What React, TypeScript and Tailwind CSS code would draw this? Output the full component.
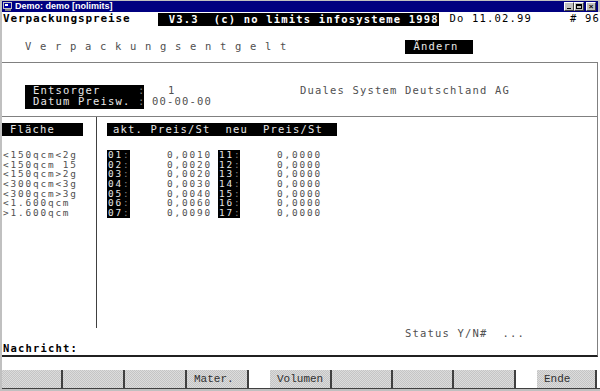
import React from 'react';

const mono = "font-['DejaVu_Sans_Mono',monospace] text-[10.5px] tracking-[1.18px] whitespace-pre";
const small = "font-['DejaVu_Sans_Mono',monospace] text-[9.4px] tracking-[1.84px] whitespace-pre";

const flaechen = ['<150qcm<2g', '<150qcm 15', '<150qcm>2g', '<300qcm<3g', '<300qcm>3g', '<1.600qcm', '>1.600qcm'];
const preise = ['0,0010', '0,0020', '0,0020', '0,0030', '0,0040', '0,0060', '0,0090'];

const TitleButton: React.FC<{ children: React.ReactNode }> = ({ children }) => (
    <div className="w-[10px] h-[9px] bg-[#c0c0c0] border-t border-l border-white border-r border-b border-r-[#404040] border-b-[#404040] flex items-center justify-center">
        {children}
    </div>
);

const FKey: React.FC<{ w: string; label?: string }> = ({ w, label }) => (
    <div className={`${w} h-full border-r-2 border-[#404040] bg-[repeating-conic-gradient(#c4c4c4_0_25%,#dcdcdc_0_50%)] [background-size:2px_2px] flex items-center pl-[7px] font-['Liberation_Mono',monospace] text-[11px] text-[#303030]`}>
        {label}
    </div>
);

export default function App() {
    return (
        <div className="w-[600px] h-[391px] bg-[#c0c0c0] pt-[1px] pl-[2px] flex flex-col overflow-hidden">
            {/* title bar */}
            <div className="h-[11px] mr-[2px] bg-[#000080] flex items-center pl-[1px] pr-[2px]">
                <svg width="10" height="9" viewBox="0 0 10 9">
                    <rect x="0" y="0" width="9" height="7" fill="#c0c0c0" />
                    <rect x="1" y="1" width="7" height="5" fill="#0000a0" />
                    <rect x="2" y="2" width="3" height="2" fill="#ffffff" />
                    <rect x="2" y="7" width="6" height="2" fill="#808080" />
                </svg>
                <span className="ml-[2px] text-white font-bold text-[9px] leading-none font-['Liberation_Sans',sans-serif]">Demo: demo [nolimits]</span>
                <div className="ml-auto flex">
                    <TitleButton><div className="w-[4px] h-[1px] bg-black mt-[4px]" /></TitleButton>
                    <TitleButton><div className="w-[6px] h-[5px] border border-black border-t-2" /></TitleButton>
                    <div className="w-[2px]" />
                    <TitleButton><span className="text-[8px] leading-none font-bold text-black font-['Liberation_Sans',sans-serif]">×</span></TitleButton>
                </div>
            </div>

            {/* screen */}
            <div className="flex-1 bg-white flex flex-col">
                <div className={`${mono} h-[14px] flex items-center`}>
                    <div className="w-[156px] pl-[1px] text-black font-bold text-[11px] tracking-[0.88px]">Verpackungspreise</div>
                    <div className="w-[282px] h-[13px] mt-[1px] bg-black text-white font-bold pl-[11px] flex items-center">V3.3  (c) no limits infosysteme 1998</div>
                    <div className="pl-[10px] text-black">Do 11.02.99</div>
                    <div className="ml-[38px] text-black">#&nbsp;96</div>
                </div>

                <div className={`${mono} mt-[14px] h-[14px] flex items-center text-[#505050]`}>
                    <div className="pl-[23px]">V e r p a c k u n g s e n t g e l t</div>
                    <div className="ml-[117px] w-[68px] h-[14px] bg-black text-[#e8e8e8] pl-[9px] flex items-center">Ändern</div>
                </div>

                <div className="mt-[8px] mr-[2px] flex-1 flex flex-col border-t border-r border-[#808080] border-b-2 border-b-[#202020]">
                    {/* Entsorger */}
                    <div className={`${mono} h-[54px] border-b border-[#808080] pt-[22px] flex`}>
                        <div className="ml-[23px] w-[119px] h-[24px] bg-black text-[#e8e8e8] pl-[8px] flex flex-col">
                            <div className="h-[11px] leading-[11px]">Entsorger     <span className="text-[#808080]">:</span></div>
                            <div className="h-[11px] leading-[11px]">Datum Preisw. <span className="text-[#808080]">:</span></div>
                        </div>
                        <div className="w-[156px] flex flex-col text-[#505050]">
                            <div className="h-[11px] leading-[11px] pl-[24px]">1</div>
                            <div className="h-[11px] leading-[11px] pl-[8px]">00-00-00</div>
                        </div>
                        <div className="h-[11px] leading-[11px] text-[#505050]">Duales System Deutschland AG</div>
                    </div>

                    {/* Tabelle */}
                    <div className={`${mono} h-[211px] flex`}>
                        <div className="w-[95px] border-r border-[#404040] pt-[6px] flex flex-col">
                            <div className="w-[81px] h-[13px] bg-black text-[#e8e8e8] pl-[8px] flex items-center">Fläche</div>
                            <div className={`${small} mt-[14px] flex flex-col text-[#505050]`}>
                                {flaechen.map((f) => (
                                    <div key={f} className="h-[9.7px] leading-[9.7px] pl-[1px]">{f}</div>
                                ))}
                            </div>
                        </div>
                        <div className="flex-1 pt-[6px] flex flex-col">
                            <div className="ml-[10px] w-[230px] h-[13px] bg-black text-[#e8e8e8] pl-[6px] flex items-center">akt. Preis/St  neu  Preis/St</div>
                            <div className={`${small} mt-[14px] flex flex-col text-[#505050]`}>
                                {preise.map((p, i) => (
                                    <div key={i} className="h-[9.7px] leading-[9.7px] flex">
                                        <div className="ml-[10px] w-[23px] bg-black text-[#e8e8e8] pl-[1px]">0{i + 1}<span className="text-[#808080]">:</span></div>
                                        <div className="w-[82px] text-right">{p}</div>
                                        <div className="ml-[6px] w-[22px] bg-black text-[#e8e8e8] pl-[1px]">1{i + 1}<span className="text-[#808080]">:</span></div>
                                        <div className="pl-[37px]">0,0000</div>
                                    </div>
                                ))}
                            </div>
                        </div>
                    </div>

                    <div className={`${mono} h-[11px] leading-[11px] pl-[403px] text-[#505050]`}>Status Y/N#  ...</div>
                    <div className={`${mono} mt-[3px] h-[12px] leading-[12px] pl-[1px] text-black font-bold`}>Nachricht:</div>
                </div>

                <div className="h-[13px]" />
                <div className="h-[18px] flex bg-white">
                    <FKey w="w-[61px]" />
                    <FKey w="w-[62px]" />
                    <FKey w="w-[62px]" />
                    <FKey w="w-[62px]" label="Mater." />
                    <div className="w-[21px]" />
                    <FKey w="w-[62px]" label="Volumen" />
                    <FKey w="w-[61px]" />
                    <FKey w="w-[61px]" />
                    <FKey w="w-[62px]" />
                    <div className="w-[21px]" />
                    <FKey w="w-[60px]" label="Ende" />
                </div>
                <div className="h-px bg-[#404040]" />
            </div>
            <div className="h-[2px]" />
        </div>
    );
}
